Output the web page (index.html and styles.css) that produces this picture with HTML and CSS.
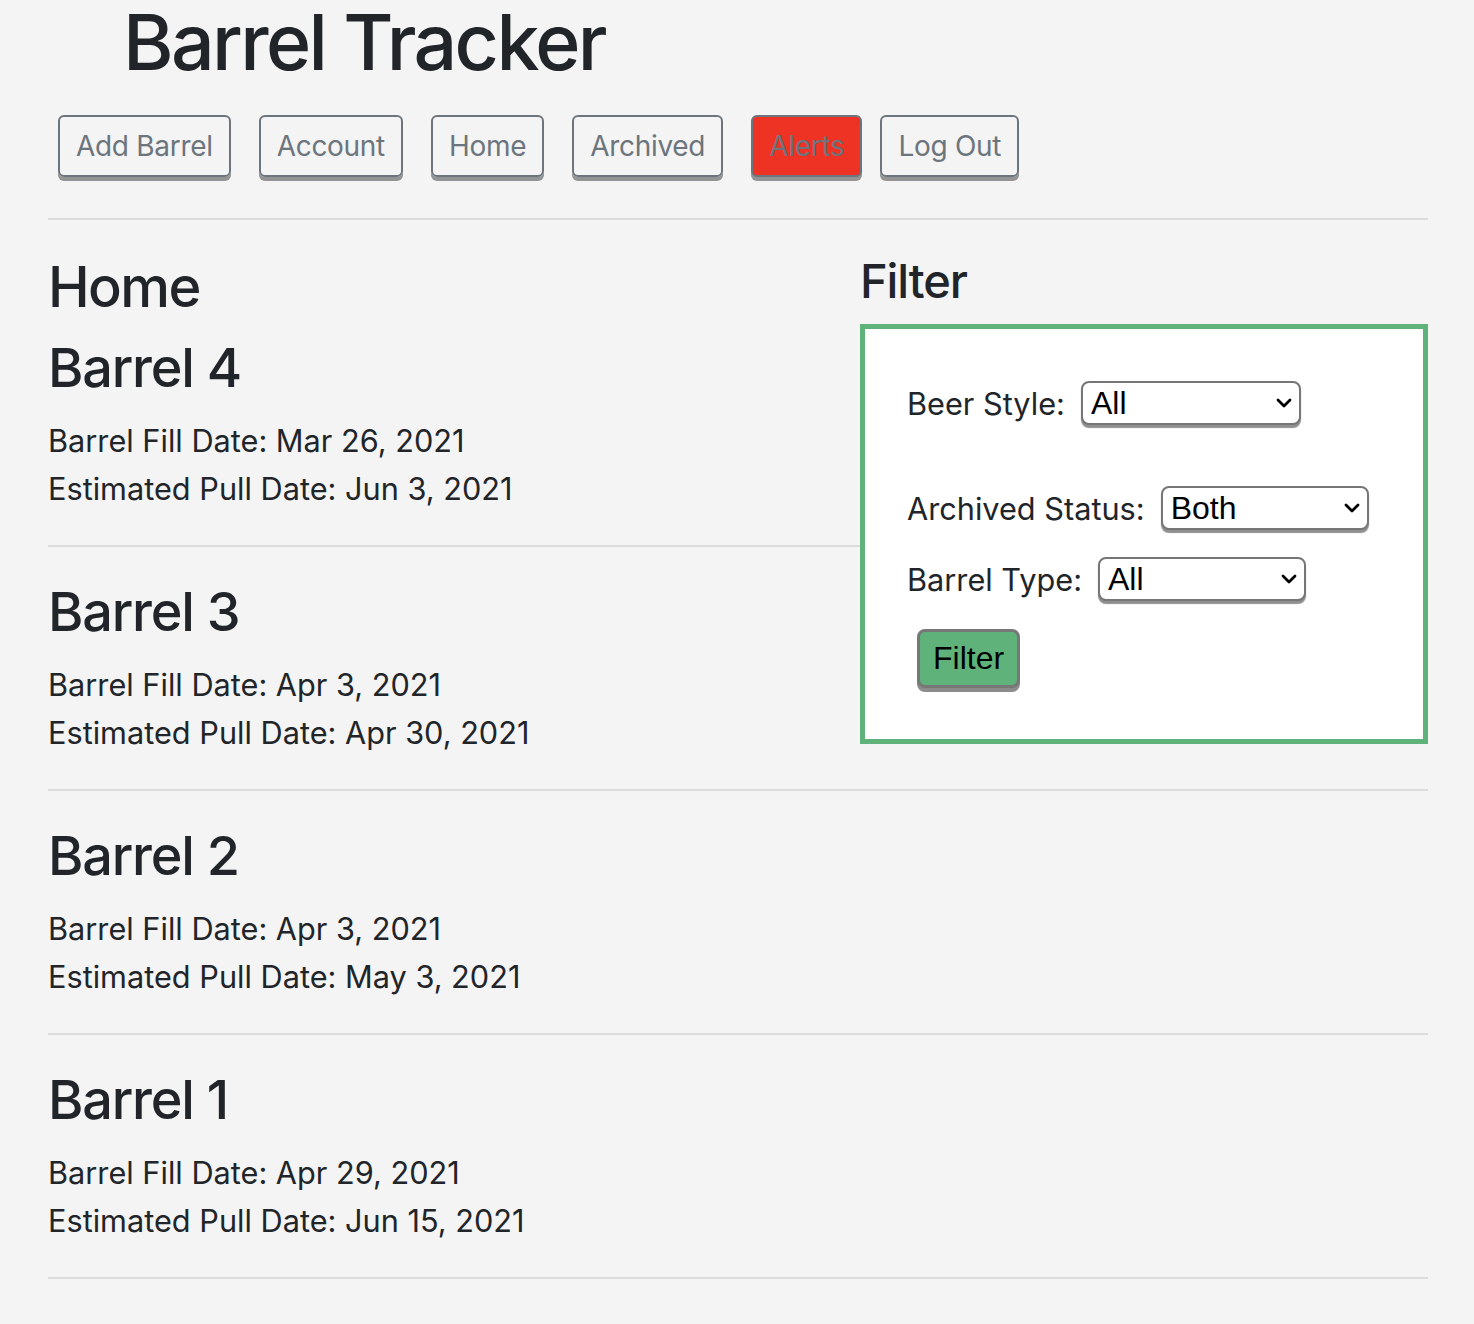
FILE: index.html
```html
<!DOCTYPE html>
<html lang="en">
<head>
<meta charset="utf-8">
<title>Barrel Tracker</title>
<link rel="stylesheet" href="styles.css">
</head>
<body>
<div class="container">
  <h1 class="title">Barrel Tracker</h1>
  <nav class="nav">
    <button class="btn">Add Barrel</button>
    <button class="btn">Account</button>
    <button class="btn">Home</button>
    <button class="btn">Archived</button>
    <button class="btn btn-alert">Alerts</button>
    <button class="btn">Log Out</button>
  </nav>
  <hr class="rule">
  <div class="content">
    <aside class="filter">
      <h3 class="filter-title">Filter</h3>
      <form class="filter-box">
        <div class="form-row row-beer">
          <label class="form-label">Beer Style:</label>
          <span class="select-wrap select-wide">
            <select class="select"><option>All</option></select>
            <svg class="chev" viewBox="0 0 16 10" width="16" height="10"><path d="M2 2 L8 8 L14 2" fill="none" stroke="#000" stroke-width="2.8" stroke-linecap="round" stroke-linejoin="round"/></svg>
          </span>
        </div>
        <div class="form-row row-archived">
          <label class="form-label">Archived Status:</label>
          <span class="select-wrap">
            <select class="select"><option>Both</option></select>
            <svg class="chev" viewBox="0 0 16 10" width="16" height="10"><path d="M2 2 L8 8 L14 2" fill="none" stroke="#000" stroke-width="2.8" stroke-linecap="round" stroke-linejoin="round"/></svg>
          </span>
        </div>
        <div class="form-row row-type">
          <label class="form-label">Barrel Type:</label>
          <span class="select-wrap">
            <select class="select"><option>All</option></select>
            <svg class="chev" viewBox="0 0 16 10" width="16" height="10"><path d="M2 2 L8 8 L14 2" fill="none" stroke="#000" stroke-width="2.8" stroke-linecap="round" stroke-linejoin="round"/></svg>
          </span>
        </div>
        <button type="button" class="filter-btn">Filter</button>
      </form>
    </aside>

    <h2 class="page-title">Home</h2>

    <section class="barrel barrel-first">
      <h3 class="barrel-name">Barrel 4</h3>
      <p class="barrel-line">Barrel Fill Date: Mar 26, 2021</p>
      <p class="barrel-line">Estimated Pull Date: Jun 3, 2021</p>
      <hr class="rule rule-barrel">
    </section>
    <section class="barrel">
      <h3 class="barrel-name">Barrel 3</h3>
      <p class="barrel-line">Barrel Fill Date: Apr 3, 2021</p>
      <p class="barrel-line">Estimated Pull Date: Apr 30, 2021</p>
      <hr class="rule rule-barrel">
    </section>
    <section class="barrel">
      <h3 class="barrel-name">Barrel 2</h3>
      <p class="barrel-line">Barrel Fill Date: Apr 3, 2021</p>
      <p class="barrel-line">Estimated Pull Date: May 3, 2021</p>
      <hr class="rule rule-barrel">
    </section>
    <section class="barrel">
      <h3 class="barrel-name">Barrel 1</h3>
      <p class="barrel-line">Barrel Fill Date: Apr 29, 2021</p>
      <p class="barrel-line">Estimated Pull Date: Jun 15, 2021</p>
      <hr class="rule rule-barrel">
    </section>
  </div>
</div>
</body>
</html>
```

FILE: styles.css
```css
html, body {
  margin: 0;
  padding: 0;
}

body {
  background: #f4f4f4;
  color: #212529;
  font-family: Inter, "Liberation Sans", sans-serif;
}

.container {
  padding: 0 46px 0 48px;
}

.title {
  margin: 0;
  padding-left: 75px;
  font-size: 77px;
  line-height: 84px;
  font-weight: 500;
  letter-spacing: -2.6px;
}

.nav {
  display: flex;
  margin-top: 31px;
  margin-left: 10px;
}

.btn {
  font-family: Inter, "Liberation Sans", sans-serif;
  font-size: 28px;
  letter-spacing: -0.3px;
  line-height: 44px;
  color: #6c757d;
  background: transparent;
  border: 2px solid #6c757d;
  border-radius: 6px;
  padding: 7px 16px;
  margin: 0 28px 0 0;
  box-shadow: 0 4px 0 #949494;
}

.btn-alert {
  background: #ee3224;
  margin-right: 18px;
}

.rule {
  margin: 41px 0 0 0;
  border: 0;
  border-top: 2px solid #dcdcdc;
  height: 0;
}

.content {
  padding-top: 33px;
}

.filter {
  float: right;
  width: 568px;
}

.filter-title {
  margin: 0 0 15px 0;
  font-size: 47px;
  line-height: 56px;
  font-weight: 500;
  letter-spacing: -1.1px;
}

.filter-box {
  background: #fff;
  border: 5px solid #5fb37a;
  padding: 52px 0 51px 42px;
}

.form-row {
  display: flex;
  align-items: center;
  height: 44px;
}

.row-archived {
  margin-top: 61px;
}

.row-type {
  margin-top: 27px;
}

.form-label {
  font-size: 30.7px;
  margin-right: 16px;
}

.select-wrap {
  position: relative;
  display: inline-block;
  width: 208px;
  height: 44px;
}

.select-wide {
  width: 220px;
}

.select {
  appearance: none;
  -webkit-appearance: none;
  width: 100%;
  height: 44px;
  box-sizing: border-box;
  border: 2px solid #767676;
  border-radius: 8px;
  background: #fff;
  color: #000;
  font-family: "Liberation Sans", Arial, sans-serif;
  font-size: 32px;
  padding: 0 0 0 8px;
  box-shadow: 0 3px 1px #8f8f8f;
}

.chev {
  position: absolute;
  right: 9px;
  top: 17px;
}

.filter-btn {
  display: block;
  margin: 28px 0 0 10px;
  height: 59px;
  padding: 0 13px;
  background: #5fb37a;
  border: 3px solid #777;
  border-radius: 8px;
  box-shadow: 0 4px 0 #8c8c8c;
  font-family: "Liberation Sans", Arial, sans-serif;
  font-size: 32px;
  color: #000;
}

.page-title {
  margin: 0;
  font-size: 56px;
  line-height: 68px;
  font-weight: 500;
  letter-spacing: -1.6px;
}

.barrel {
  margin: 0;
}

.barrel-name {
  margin: 32px 0 16px 0;
  font-size: 54px;
  line-height: 66px;
  font-weight: 500;
  letter-spacing: -1.2px;
}

.barrel-first .barrel-name {
  margin-top: 14px;
}

.barrel-line {
  margin: 0;
  font-size: 30.7px;
  line-height: 48px;
}

.rule-barrel {
  margin-top: 32px;
}
```
